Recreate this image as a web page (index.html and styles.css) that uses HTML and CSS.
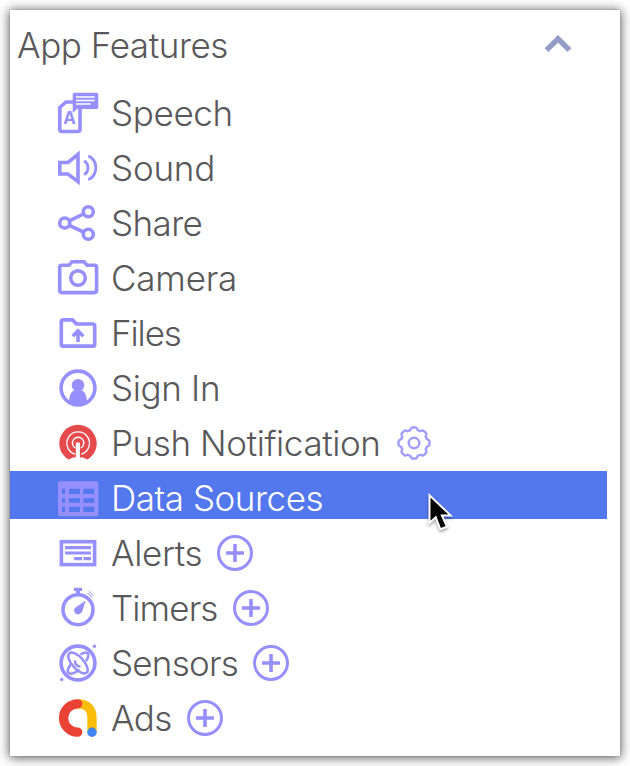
FILE: index.html
```html
<!DOCTYPE html>
<html lang="en">
<head>
<meta charset="utf-8">
<title>App Features</title>
<link rel="stylesheet" href="styles.css">
</head>
<body>
<svg class="defs" width="0" height="0" aria-hidden="true">
  <symbol id="plus" viewBox="0 0 36 36"><circle cx="18" cy="18" r="16.5" fill="none" stroke="#958fff" stroke-width="3"/><path d="M18 9v18M9 18h18" stroke="#958fff" stroke-width="3.600"/></symbol>
</svg>
<main class="panel">
  <header class="head">
    <h1 class="title">App Features</h1>
    <svg class="chevron" width="28" height="20" viewBox="0 0 28 20"><path d="M2.500 16.200 14 4.800 25.500 16.200" fill="none" stroke="#949dc8" stroke-width="5.400"/></svg>
  </header>
  <ul class="list">
    <li class="row"><svg class="icon" viewBox="0 0 42 44"><path d="M16.500 11H9L2.800 16.500V38.600Q2.800 40.500 4.700 40.500H21Q23 40.500 23 38.600V17" class="line"/><path d="M17.500 1.700h22q1.800 0 1.800 1.800v12.700q0 1.800-1.800 1.800H20l-4.300 4V3.500q0-1.800 1.800-1.800z" class="fill"/><path d="M19 6h18.700M19 9.500h18.700M19 13h14.700" stroke="#fff" stroke-width="1.300"/><text x="12.600" y="33" class="letter">A</text></svg><span class="label speech">Speech</span></li>
    <li class="row"><svg class="icon" viewBox="0 0 42 44"><path d="M2.800 16.500h8.200L21 8.300v27.400L11 28H2.800z" class="line"/><path d="M27 15c5.300 2.500 5.300 11 0 13.500M31.300 9.800c10 5 10 19 0 24" class="line thin"/></svg><span class="label sound">Sound</span></li>
    <li class="row"><svg class="icon" viewBox="0 0 42 44"><path d="M12.300 19.800 26.500 13M12.300 24.300 26.500 31" class="line"/><g class="line"><circle cx="7.700" cy="22" r="5"/><circle cx="31.300" cy="10.700" r="5"/><circle cx="31.300" cy="33.300" r="5"/></g></svg><span class="label share">Share</span></li>
    <li class="row"><svg class="icon" viewBox="0 0 42 44"><path d="M4.700 9.300H12L15 5.700H27L30 9.300H37.600Q39.600 9.300 39.600 11.300V34.600Q39.600 36.600 37.600 36.600H4.700Q2.700 36.600 2.700 34.600V11.300Q2.700 9.300 4.700 9.300Z" class="line"/><circle cx="21" cy="22" r="7.300" class="line"/></svg><span class="label camera">Camera</span></li>
    <li class="row"><svg class="icon" viewBox="0 0 42 44"><path d="M6.200 8.900H15.500L19.500 13H36Q37.700 13 37.700 14.700V33.400Q37.700 35.100 36 35.100H6Q4.300 35.100 4.300 33.400V10.600Q4.300 8.900 6.200 8.900Z" class="line"/><path d="M21 31V20.500M15.700 25.200 21 19.900l5.300 5.300" class="line"/></svg><span class="label files">Files</span></li>
    <li class="row"><svg class="icon" viewBox="0 0 42 44"><circle cx="21" cy="22" r="16.900" class="line"/><circle cx="21" cy="19.200" r="6.200" class="fill"/><path d="M12 37c0-8 2.500-12 6-13h6c3.500 1 6 5 6 13-5 3.500-13 3.500-18 0z" class="fill"/></svg><span class="label sign">Sign In</span></li>
    <li class="row"><svg class="icon" viewBox="0 0 42 44"><path d="M11.500 38.600A18.700 18.700 0 1 1 30.500 38.600L27 37Q24.500 35.500 22.700 37V22H19.400V37Q17.500 35.500 15 37Z" fill="#e54b4d"/><path d="M18 33.100A11.300 11.300 0 1 1 24.300 33.100M18.500 27A5.700 5.700 0 1 1 23.700 27" fill="none" stroke="#fff" stroke-width="1.300"/><path d="M18.800 21.500h4v16.500h-4z" fill="#fff"/></svg><span class="label push">Push Notification</span><svg class="gear" width="34" height="34" viewBox="-17 -17 34 34"><path class="gearline" d="M-3.800-12.800L-3-14.500Q-2.500-15.500-1.500-15.500H1.500Q2.500-15.500 3-14.500L3.800-12.800Q5.200-12.300 6.400-11.700L8.100-12.400Q9.200-12.800 9.900-12L12-9.900Q12.800-9.200 12.400-8.100L11.700-6.400Q12.300-5.200 12.800-3.800L14.500-3Q15.500-2.500 15.500-1.500V1.500Q15.500 2.500 14.500 3L12.800 3.800Q12.300 5.200 11.700 6.400L12.400 8.100Q12.800 9.200 12 9.900L9.900 12Q9.200 12.800 8.100 12.400L6.400 11.700Q5.200 12.300 3.800 12.800L3 14.500Q2.500 15.500 1.500 15.500H-1.500Q-2.500 15.500-3 14.500L-3.800 12.800Q-5.200 12.300-6.400 11.700L-8.100 12.400Q-9.200 12.800-9.900 12L-12 9.900Q-12.800 9.200-12.400 8.100L-11.700 6.400Q-12.300 5.200-12.800 3.800L-14.500 3Q-15.500 2.500-15.500 1.500V-1.500Q-15.500-2.500-14.500-3L-12.800-3.800Q-12.300-5.200-11.700-6.400L-12.400-8.100Q-12.800-9.200-12-9.900L-9.900-12Q-9.200-12.800-8.100-12.400L-6.400-11.700Q-5.200-12.300-3.800-12.800Z"/><circle r="5.300" class="gearline"/></svg></li>
    <li class="row selected"><svg class="icon" viewBox="0 0 42 44"><path fill-rule="evenodd" class="fill" d="M3 5.300h36.300q2 0 2 2v31q0 2-2 2H3q-2 0-2-2v-31q0-2 2-2zM5 12.700V18h3v-5.300zM12 12.700V18h11v-5.300zM26.300 12.700V18h11v-5.300zM5 22.300v4.400h3v-4.400zM12 22.300v4.400h11v-4.400zM26.300 22.300v4.400h11v-4.400zM5 30.700V36h3v-5.300zM12 30.700V36h11v-5.300zM26.300 30.700V36h11v-5.300z"/></svg><span class="label data">Data Sources</span></li>
    <li class="row"><svg class="icon" viewBox="0 0 42 44"><rect x="4.400" y="10.700" width="33.200" height="22.900" class="line"/><path d="M8 16.600h26M8 22h26M17 27.600h8M26.500 27.600H34" class="line slim"/></svg><span class="label alerts">Alerts</span><svg class="plus"><use href="#plus"/></svg></li>
    <li class="row"><svg class="icon" viewBox="0 0 42 44"><circle cx="21" cy="23.700" r="15" class="line"/><path d="M17 1.700h8v3.300h-2v3h-4V5h-2zM28.700 14.600 25 26Q22 30 18.500 27.500 15.500 24 18.500 21.500z" class="fill"/><path d="M30.500 7.500q3 1 4.500 4M32 5.500q3 1.500 4 4" fill="none" stroke="#958fff" stroke-width="1"/></svg><span class="label timers">Timers</span><svg class="plus"><use href="#plus"/></svg></li>
    <li class="row"><svg class="icon" viewBox="0 0 42 44"><circle cx="21" cy="22" r="16.900" class="line"/><g fill="none" stroke="#958fff" stroke-width="2.500"><ellipse cx="21" cy="22" rx="13" ry="5.800" transform="rotate(48 21 22)"/><path d="M23.500 13.500C27 11.300 30 11 31 12.500 32 14.300 31 17 29 20M13.500 23.500C10.500 28 10 31 11.500 32 13.500 33.300 18 32 22.500 28.500"/><path d="M18 19.500c0 4 2 6 5.500 6"/></g><circle cx="37.400" cy="5.300" r="1.700" class="fill"/><circle cx="4.700" cy="38.500" r="1.700" class="fill"/></svg><span class="label sensors">Sensors</span><svg class="plus"><use href="#plus"/></svg></li>
    <li class="row"><svg class="icon" viewBox="0 0 42 44"><path d="M20.500 7.800Q35 8 35 22V36" fill="none" stroke="#fabc05" stroke-width="9.300"/><path d="M20.700 7.800a14.100 14.100 0 0 0 0 28.300" fill="none" stroke="#ea4336" stroke-width="9.300" stroke-linecap="round"/><circle cx="35" cy="36.200" r="4.700" fill="#4286f5"/></svg><span class="label ads">Ads</span><svg class="plus"><use href="#plus"/></svg></li>
  </ul>
</main>
<svg class="cursor" width="32" height="44" viewBox="0 0 32 44"><path d="M4.500 3.300V31l6.200-5.700 4.700 12 6.500-2.600-5-11.300h8.700z" fill="#000" stroke="#fff" stroke-width="2"/></svg>
</body>
</html>
```
FILE: styles.css
```css
* { box-sizing: border-box; }
body { margin: 0; padding: 10px; height: 766px; overflow: hidden; background: #fff; font-family: Inter, "Liberation Sans", sans-serif; color: #58585a; }
.defs { position: absolute; }
.panel { width: 610px; height: 746px; background: #fff; box-shadow: 0 0 1px rgba(0,0,0,.35), 0 1px 10px 1px rgba(0,0,0,.62); }
.head { display: flex; height: 76px; padding: 11px 48px 0 7px; justify-content: space-between; align-items: flex-start; }
.title { margin: 0; font-size: 35px; font-weight: 300; line-height: 48px; letter-spacing: -.42px; white-space: nowrap; }
.chevron { margin-top: 13px; }
.list { display: flex; flex-direction: column; gap: 7px; margin: 0; padding: 0; list-style: none; }
.row { display: flex; width: 597px; height: 48px; padding-left: 47px; align-items: flex-start; }
.selected { background: #5377ec; color: #fff; }
.icon { width: 42px; height: 44px; margin-top: 5px; flex: none; }
.label { margin-left: 12px; font-size: 35px; font-weight: 300; line-height: 48px; padding-top: 3px; height: 48px; white-space: nowrap; flex: none; }
.speech { letter-spacing: -.35px; }
.sound { letter-spacing: -.2px; }
.share { letter-spacing: -.6px; }
.camera { letter-spacing: -.2px; }
.files { letter-spacing: -1.1px; }
.sign { letter-spacing: -.35px; }
.push { letter-spacing: -.4px; }
.data { letter-spacing: -.45px; }
.alerts { letter-spacing: -.35px; }
.timers { letter-spacing: -.9px; }
.sensors { letter-spacing: -.78px; }
.ads { letter-spacing: -.6px; }
.plus { width: 36px; height: 36px; margin: 9px 0 0 15px; flex: none; }
.gear { margin: 10px 0 0 16px; flex: none; }
.line { fill: none; stroke: #958fff; stroke-width: 3.6; }
.thin { stroke-width: 2.9; }
.slim { stroke-width: 3.2; }
.fill { fill: #958fff; }
.letter { fill: #958fff; font: 700 17px Inter, sans-serif; text-anchor: middle; }
.gearline { fill: none; stroke: #a19cff; stroke-width: 2.4; }
.cursor { position: absolute; left: 425px; top: 492px; filter: drop-shadow(0 2px 1.500px rgba(0,0,0,.35)); }
```
